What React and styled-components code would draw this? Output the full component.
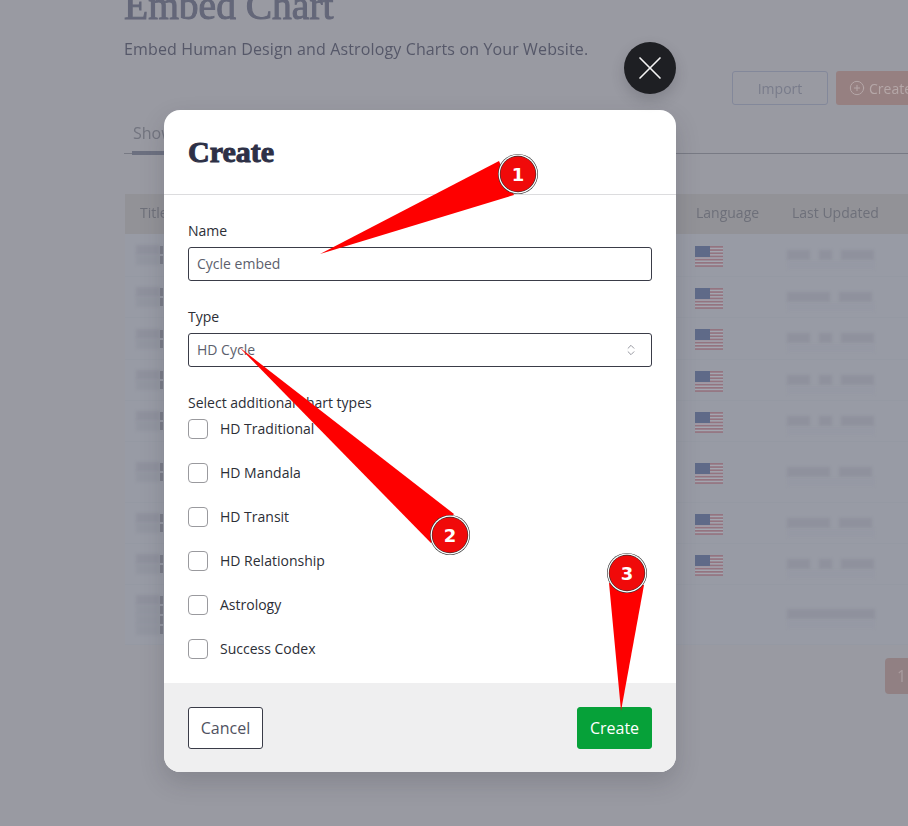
import React from "react";
import styled, { createGlobalStyle } from "styled-components";
import { ChevronsUpDown, X, CirclePlus } from "lucide-react";

const Global = createGlobalStyle`
  html, body { margin: 0; padding: 0; background: #999aa2; overflow: hidden; }
  * { box-sizing: border-box; }
  body { font-family: "Open Sans", "Liberation Sans", sans-serif; }
`;

const Screen = styled.div`
  position: relative;
  width: 908px;
  height: 826px;
  overflow: hidden;
  background: #999aa2;
`;

const Page = styled.div`
  display: flex;
  flex-direction: column;
  padding-left: 124px;
  width: 1000px;
  filter: blur(0.4px);
`;

const PageTitle = styled.h1`
  margin: -19px 0 0;
  height: 50px;
  font: 400 39.5px/50px "Liberation Serif", serif;
  -webkit-text-stroke: 1px #646779;
  color: #646779;
`;

const Subtitle = styled.p`
  margin: 6px 0 0;
  font-size: 16px;
  letter-spacing: 0.13px;
  line-height: 24px;
  color: #565869;
`;

const Actions = styled.div`
  display: flex;
  gap: 8px;
  margin: 10px 0 0 608px;
`;

const GhostButton = styled.div`
  width: 96px;
  height: 34px;
  border: 1px solid #83889a;
  border-radius: 3px;
  display: flex;
  align-items: center;
  justify-content: center;
  font-size: 14px;
  color: #797c8b;
`;

const TintButton = styled.div`
  width: 120px;
  height: 34px;
  border-radius: 3px;
  background: #968081;
  display: flex;
  align-items: center;
  gap: 4px;
  padding-left: 13px;
  font-size: 14px;
  color: #b5a7a8;
`;

const Tabs = styled.div`
  position: relative;
  margin-top: 16px;
  height: 33px;
  border-bottom: 1px solid #787a84;
  padding-left: 9px;
  font-size: 16px;
  line-height: 24px;
  color: #72747f;
`;

const TabMark = styled.span`
  position: absolute;
  left: 8px;
  bottom: -2px;
  width: 60px;
  height: 4px;
  background: #6c7080;
`;

const Table = styled.div`
  margin: 40px 0 0 1px;
  width: 790px;
  display: flex;
  flex-direction: column;
`;

const HeadRow = styled.div`
  display: grid;
  grid-template-columns: 571px 96px 1fr;
  align-items: center;
  height: 40px;
  padding-bottom: 3px;
  background: #929297;
  font-size: 14px;
  color: #6e707a;
`;

const HeadCell = styled.span`
  padding-left: ${(p) => p.$inset || 0}px;
`;

const Row = styled.div`
  display: grid;
  grid-template-columns: 571px 96px 1fr;
  align-items: center;
  height: ${(p) => p.$h}px;
  background: #989ba5;
  border-bottom: 1px solid #9599a3;
`;

const TitleCell = styled.div`
  padding-left: 11px;
  display: flex;
  flex-direction: column;
`;

const TitleLine = styled.div`
  display: flex;
  align-items: center;
`;

const Glyph = styled.span`
  width: 3px;
  height: 8px;
  background: #7b7d89;
  filter: blur(0.6px);
`;

const FlagCell = styled.div`
  margin: 2px 0 0 -1px;
`;

const DateCell = styled.div`
  margin: 8px 0 0 -5px;
  display: flex;
  flex-direction: column;
  gap: 1px;
`;

const DateLine = styled.div`
  display: flex;
  gap: 9px;
`;

const Smudge = styled.div`
  width: ${(p) => p.$w}px;
  height: ${(p) => p.$h || 11}px;
  background: ${(p) => p.$c || "#8f919d"};
  filter: blur(1.4px);
`;

const Pager = styled.div`
  margin: 13px 0 0 761px;
  width: 40px;
  height: 36px;
  border-radius: 4px;
  background: #918083;
  font-size: 16px;
  line-height: 36px;
  padding-left: 12px;
  color: #aa9c9f;
`;

const Overlay = styled.div`
  position: absolute;
  inset: 0;
  padding: 110px 0 0 164px;
`;

const Modal = styled.div`
  position: relative;
  width: 512px;
  height: 662px;
  background: #fff;
  border-radius: 16px;
  display: flex;
  flex-direction: column;
  box-shadow: 0 10px 24px rgba(40, 40, 50, 0.18);
`;

const CloseButton = styled.button`
  position: absolute;
  top: -68px;
  right: 0;
  width: 52px;
  height: 52px;
  border: 0;
  padding: 0;
  border-radius: 50%;
  background: #1e1f23;
  color: #f4f4f4;
  display: flex;
  align-items: center;
  justify-content: center;
  box-shadow: 0 6px 14px rgba(40, 40, 50, 0.2);
`;

const ModalHeader = styled.header`
  height: 85px;
  flex: none;
  padding: 24px 24px 0;
  border-bottom: 1px solid #dcdcde;
`;

const ModalTitle = styled.h2`
  margin: 0;
  font: 700 30px/36px "Liberation Serif", serif;
  -webkit-text-stroke: 1px #2d3046;
  color: #2d3046;
`;

const ModalBody = styled.div`
  flex: 1;
  padding: 25px 24px 24px;
  display: flex;
  flex-direction: column;
`;

const Label = styled.label`
  display: block;
  font-size: 14px;
  line-height: 22px;
  color: #2c2e36;
  margin-bottom: 5px;
`;

const Field = styled.div`
  margin-bottom: 25px;
`;

const TextInput = styled.input`
  display: block;
  width: 100%;
  height: 34px;
  padding: 0 8px 2px;
  border: 1px solid #3a3c48;
  border-radius: 3px;
  font: 400 14px "Open Sans", sans-serif;
  color: #5c5f6d;
  background: #fff;
  outline: none;
`;

const SelectBox = styled.div`
  display: flex;
  align-items: center;
  justify-content: space-between;
  height: 34px;
  padding: 0 13px 0 8px;
  border: 1px solid #3a3c48;
  border-radius: 3px;
  font-size: 14px;
  color: #5c5f6d;
`;

const RaisedText = styled.span`
  padding-bottom: 2px;
`;

const CheckList = styled.div`
  display: flex;
  flex-direction: column;
  gap: 24px;
`;

const CheckRow = styled.div`
  display: flex;
  align-items: center;
  gap: 12px;
  height: 20px;
  font-size: 14px;
  color: #2c2e36;
`;

const CheckBox = styled.span`
  width: 20px;
  height: 20px;
  border: 1px solid #9a9a9e;
  border-radius: 4px;
  background: #fff;
`;

const ModalFooter = styled.footer`
  height: 89px;
  flex: none;
  background: #efeff0;
  border-radius: 0 0 16px 16px;
  padding: 24px;
  display: flex;
  align-items: flex-start;
  justify-content: space-between;
`;

const FooterButton = styled.button`
  height: 42px;
  width: 75px;
  padding: 0;
  border-radius: 3px;
  font: 400 16px "Open Sans", sans-serif;
  border: 1px solid ${(p) => (p.$primary ? "#06a139" : "#3a3c48")};
  background: ${(p) => (p.$primary ? "#06a139" : "#fff")};
  color: ${(p) => (p.$primary ? "#fff" : "#50525f")};
`;

const Annotations = styled.svg`
  position: absolute;
  inset: 0;
  width: 908px;
  height: 826px;
  pointer-events: none;
`;

const FlagIcon = styled.svg`
  display: block;
  filter: blur(0.4px);
`;

const Flag = () => (
  <FlagIcon width="28" height="21" viewBox="0 0 28 21">
    <rect width="28" height="21" fill="#a3a6b0" />
    {[0, 3.2, 6.4, 9.6, 12.8, 16, 19.2].map((y) => (
      <rect key={y} y={y} width="28" height="1.7" fill="#947480" />
    ))}
    <rect width="15" height="11" fill="#5f6a88" />
  </FlagIcon>
);

const rows = [
  { h: 43, lines: 1, d: [23, 13, 33] },
  { h: 41, lines: 1, d: [43, 33] },
  { h: 42, lines: 1, d: [23, 13, 33] },
  { h: 41, lines: 1, d: [23, 13, 33] },
  { h: 41, lines: 1, d: [23, 13, 33] },
  { h: 61, lines: 1, d: [43, 33] },
  { h: 41, lines: 1, d: [43, 33] },
  { h: 41, lines: 1, d: [23, 13, 33] },
  { h: 60, lines: 3, d: [88], noFlag: true },
];

const marks = [
  { n: 1, cx: 518, cy: 174, pts: "320,254 499,161 514,195" },
  { n: 2, cx: 450, cy: 535, pts: "239,347 454,514 431,543" },
  { n: 3, cx: 627, cy: 573, pts: "621,711 609,583 644,585" },
];

const checks = [
  "HD Traditional",
  "HD Mandala",
  "HD Transit",
  "HD Relationship",
  "Astrology",
  "Success Codex",
];

export default function App() {
  return (
    <Screen>
      <Global />
      <Page>
        <PageTitle>Embed Chart</PageTitle>
        <Subtitle>Embed Human Design and Astrology Charts on Your Website.</Subtitle>
        <Actions>
          <GhostButton>Import</GhostButton>
          <TintButton>
            <CirclePlus size={16} strokeWidth={1.5} />
            Create
          </TintButton>
        </Actions>
        <Tabs>
          Show
          <TabMark />
        </Tabs>
        <Table>
          <HeadRow>
            <HeadCell $inset={15}>Title</HeadCell>
            <HeadCell>Language</HeadCell>
            <HeadCell>Last Updated</HeadCell>
          </HeadRow>
          {rows.map((r, i) => (
            <Row key={i} $h={r.h}>
              <TitleCell>
                {Array.from({ length: r.lines + 1 }).map((_, k) => (
                  <TitleLine key={k}>
                    <Smudge $w={24} $h={10} $c={k === 0 ? "#8f919d" : "#9295a0"} />
                    <Glyph />
                  </TitleLine>
                ))}
              </TitleCell>
              <FlagCell>{!r.noFlag && <Flag />}</FlagCell>
              <DateCell>
                <DateLine>
                  {r.d.map((w, k) => (
                    <Smudge key={k} $w={w} $h={10} />
                  ))}
                </DateLine>
                <Smudge $w={88} $h={8} $c="#9699a4" />
              </DateCell>
            </Row>
          ))}
        </Table>
        <Pager>1</Pager>
      </Page>
      <Overlay>
        <Modal>
          <CloseButton aria-label="Close">
            <X size={40} strokeWidth={1} />
          </CloseButton>
          <ModalHeader>
            <ModalTitle>Create</ModalTitle>
          </ModalHeader>
          <ModalBody>
            <Field>
              <Label>Name</Label>
              <TextInput defaultValue="Cycle embed" />
            </Field>
            <Field>
              <Label>Type</Label>
              <SelectBox>
                <RaisedText>HD Cycle</RaisedText>
                <ChevronsUpDown size={14} color="#888a94" strokeWidth={1.5} />
              </SelectBox>
            </Field>
            <Label>Select additional chart types</Label>
            <CheckList>
              {checks.map((c) => (
                <CheckRow key={c}>
                  <CheckBox />
                  <RaisedText>{c}</RaisedText>
                </CheckRow>
              ))}
            </CheckList>
          </ModalBody>
          <ModalFooter>
            <FooterButton>Cancel</FooterButton>
            <FooterButton $primary>Create</FooterButton>
          </ModalFooter>
        </Modal>
      </Overlay>
      <Annotations viewBox="0 0 908 826">
        {marks.map((m) => (
          <g key={m.n}>
            <polygon points={m.pts} fill="#fe0000" />
            <circle cx={m.cx} cy={m.cy} r="20" fill="#333" />
            <circle cx={m.cx} cy={m.cy} r="19.4" fill="#fff" />
            <circle cx={m.cx} cy={m.cy} r="18.2" fill="#333" />
            <circle cx={m.cx} cy={m.cy} r="17.6" fill="#f00a0a" />
            <text
              x={m.cx}
              y={m.cy + 6.5}
              textAnchor="middle"
              fontFamily="'DejaVu Sans', sans-serif"
              fontWeight="700"
              fontSize="18"
              fill="#fff"
            >
              {m.n}
            </text>
          </g>
        ))}
      </Annotations>
    </Screen>
  );
}
